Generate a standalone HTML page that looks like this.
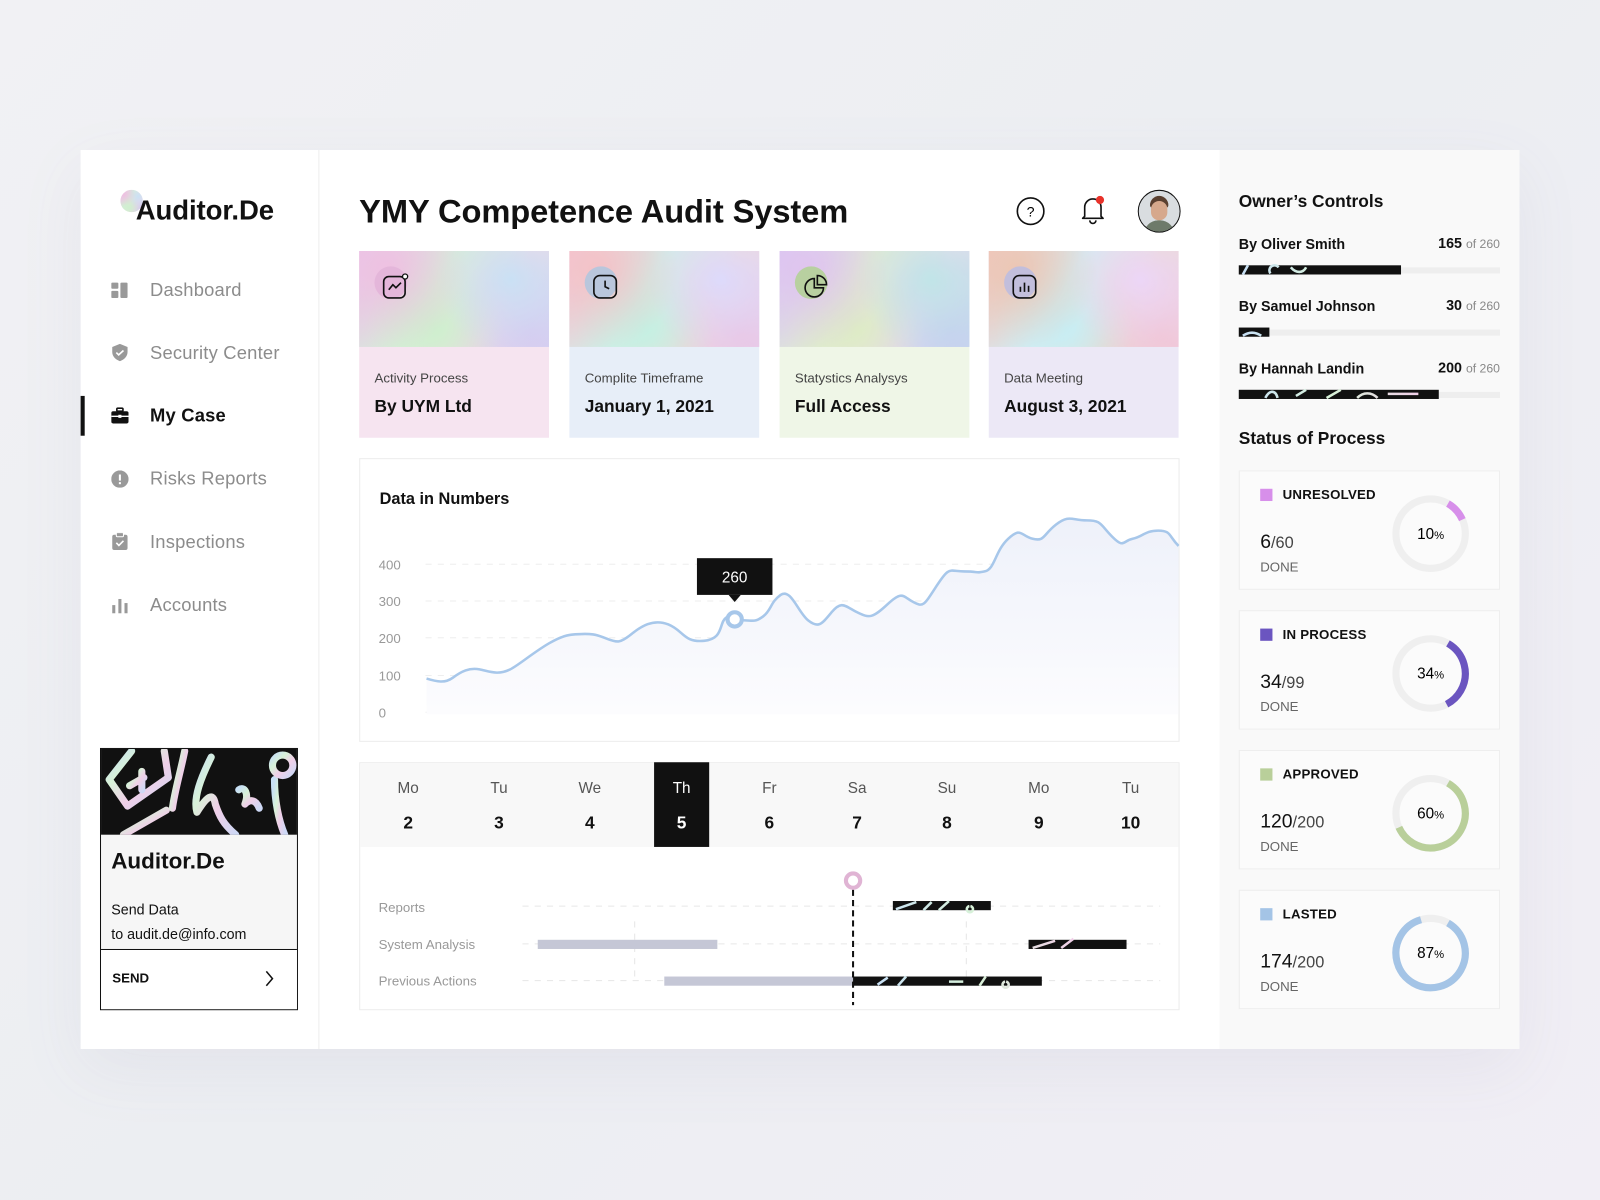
<!DOCTYPE html>
<html><head><meta charset="utf-8"><style>
*{margin:0;padding:0;box-sizing:border-box}
html,body{width:1600px;height:1200px;overflow:hidden}
body{background:linear-gradient(135deg,#f1f1f4 0%,#eceef2 50%,#f1eef5 100%);font-family:"Liberation Sans",sans-serif;color:#111}
#s{position:absolute;left:0;top:0;width:1568px;height:1176px;transform:scale(1.020408);transform-origin:0 0}
.a{position:absolute}
.panel{left:79px;top:147px;width:1410px;height:881px;background:#fff;box-shadow:0 20px 60px rgba(120,120,150,.08)}
.nav{position:absolute;left:147px;font-size:18px;color:#8c8c8c;letter-spacing:.2px}
.nico{position:absolute;left:109px;width:17px;height:17px}
.holo{background:
radial-gradient(circle at 15% 20%,rgba(240,190,225,.9),transparent 45%),
radial-gradient(circle at 80% 30%,rgba(200,225,245,.95),transparent 45%),
radial-gradient(circle at 40% 80%,rgba(205,240,205,.95),transparent 50%),
radial-gradient(circle at 90% 85%,rgba(215,200,240,.9),transparent 45%),
linear-gradient(120deg,#e8c8ea,#d6eed8 40%,#f3d8e4 70%,#cfdcf3);}
.card{position:absolute;top:246px;width:186px;height:183px}
.card .top{height:94px}
.card .lb{position:absolute;left:15px;top:117px;font-size:13px;color:#444}
.card .vl{position:absolute;left:15px;top:143px;font-size:17px;font-weight:bold;color:#111}
.ci{position:absolute;left:15px;top:15px;width:32px;height:32px;border-radius:50%}
.yl{position:absolute;left:371px;font-size:13px;color:#999}
.day{position:absolute;top:747px;width:54px;text-align:center;height:83px}
.day .d{margin-top:17px;font-size:15px;color:#555}
.day .n{margin-top:16px;font-size:17px;font-weight:bold;color:#111}
.gl{position:absolute;left:371px;font-size:13px;color:#999}
.st{position:absolute;left:1214px;width:256px;height:117px;border:1px solid #eee;background:#fbfbfb}
.st .sq{position:absolute;left:20px;top:17px;width:12px;height:12px}
.st .t{position:absolute;left:42px;top:15px;font-size:13px;font-weight:bold;letter-spacing:.2px}
.st .v{position:absolute;left:20px;top:59px;font-size:19px;color:#111}
.st .v span{font-size:16px;color:#444}
.st .dn{position:absolute;left:20px;top:86px;font-size:13px;color:#666}
.st svg{position:absolute;left:147px;top:21px}
.oc{position:absolute;left:1214px;font-size:14px;font-weight:bold}
.ov{position:absolute;right:98px;font-size:14px;font-weight:bold;text-align:right}
.ov span{font-size:12px;font-weight:normal;color:#888}
.tr{position:absolute;left:1214px;width:256px;height:6px;background:#eee}
.bk{position:absolute;left:1214px;height:9px;background:#111;overflow:hidden}
</style></head><body><div id="s">
<div class="a panel"></div>
<div class="a" style="left:312px;top:147px;width:1px;height:881px;background:#eee"></div>
<div class="a" style="left:1195px;top:147px;width:294px;height:881px;background:#f9f9f9"></div>

<div class="a holo" style="left:118px;top:186px;width:22px;height:22px;border-radius:50%"></div>
<div class="a" style="left:133px;top:191px;font-size:27px;font-weight:bold;letter-spacing:-.1px">Auditor.De</div>

<svg class="nico" style="top:276px" viewBox="0 0 17 17"><rect x="0" y="1" width="7" height="6" rx="1" fill="#999"/><rect x="0" y="9" width="7" height="7" rx="1" fill="#999"/><rect x="9" y="1" width="7" height="15" rx="1" fill="#999"/></svg>
<div class="nav" style="top:274px">Dashboard</div>
<svg class="nico" style="top:337px" viewBox="0 0 17 17"><path d="M8.5 0L16 3v5c0 4.5-3.5 7.5-7.5 9C4.5 15.5 1 12.5 1 8V3z" fill="#999"/><path d="M5 8.5l2.3 2.3L12 6.5" stroke="#fff" stroke-width="1.6" fill="none"/></svg>
<div class="nav" style="top:336px">Security Center</div>
<div class="a" style="left:79px;top:388px;width:4px;height:39px;background:#111"></div>
<svg class="nico" style="top:399px" viewBox="0 0 17 17"><rect x="5.5" y="1" width="6" height="3" rx="1" fill="none" stroke="#111" stroke-width="1.6"/><rect x="0" y="4" width="17" height="12" rx="2" fill="#111"/><path d="M0 9h17" stroke="#fff" stroke-width="1.3"/><rect x="7" y="7.5" width="3" height="3" fill="#fff"/></svg>
<div class="nav" style="top:397px;color:#111;font-weight:bold">My Case</div>
<svg class="nico" style="top:461px" viewBox="0 0 17 17"><circle cx="8.5" cy="8.5" r="8.5" fill="#999"/><rect x="7.5" y="4" width="2" height="6" fill="#fff"/><rect x="7.5" y="11.5" width="2" height="2" fill="#fff"/></svg>
<div class="nav" style="top:459px">Risks Reports</div>
<svg class="nico" style="top:522px" viewBox="0 0 17 17"><rect x="1" y="2" width="15" height="15" rx="2" fill="#999"/><rect x="5" y="0" width="7" height="4" rx="1" fill="#999" stroke="#fff" stroke-width="1"/><path d="M5 10l2.5 2.5L12 8" stroke="#fff" stroke-width="1.6" fill="none"/></svg>
<div class="nav" style="top:521px">Inspections</div>
<svg class="nico" style="top:585px" viewBox="0 0 17 17"><rect x="1" y="8" width="3" height="8" fill="#999"/><rect x="7" y="2" width="3" height="14" fill="#999"/><rect x="13" y="6" width="3" height="10" fill="#999"/></svg>
<div class="nav" style="top:583px">Accounts</div>

<div class="a" style="left:98px;top:733px;width:194px;height:257px;border:1.5px solid #111;background:#f6f6f6;overflow:hidden">
<svg width="194" height="84" style="display:block;background:#111"><defs><linearGradient id="hg" x1="0" x2="1" y1="0" y2="1"><stop offset="0" stop-color="#c8e0f5"/><stop offset=".3" stop-color="#d8f2d8"/><stop offset=".6" stop-color="#f0cfe8"/><stop offset="1" stop-color="#cdd8f5"/></linearGradient></defs>
<g fill="none" stroke="url(#hg)" stroke-width="7" stroke-linecap="round" stroke-linejoin="round">
<path d="M30 2L8 30l18 26 40-28-4-26"/><path d="M28 36l14-8M40 22v18"/><path d="M22 84l42-24"/>
<path d="M82 2c-4 20-10 40-12 56"/><path d="M108 8c-10 20-18 40-14 54 10-16 16-20 18-8 4 12 8 20 20 30"/>
<path d="M135 40c6-4 10 4 6 14 4-4 10-6 14 4"/><path d="M148 4v20"/><path d="M170 30c0 20 4 40 10 54"/></g>
<circle cx="178" cy="16" r="10" fill="none" stroke="url(#hg)" stroke-width="7"/></svg>
<div style="position:absolute;left:10px;top:97px;font-size:22px;font-weight:bold">Auditor.De</div>
<div style="position:absolute;left:10px;top:145px;font-size:14px;line-height:24px">Send Data<br>to audit.de@info.com</div>
<div style="position:absolute;left:0;top:196px;width:194px;height:60px;background:#fff;border-top:1.5px solid #111">
<div style="position:absolute;left:11px;top:20px;font-size:13px;font-weight:bold">SEND</div>
<svg style="position:absolute;left:160px;top:20px" width="10" height="16"><path d="M2 1l6 7-6 7" stroke="#111" stroke-width="1.5" fill="none"/></svg></div>
</div>

<div class="a" style="left:352px;top:189px;font-size:32px;font-weight:bold;letter-spacing:-.1px">YMY Competence Audit System</div>
<svg class="a" style="left:996px;top:193px" width="28" height="28"><circle cx="14" cy="14" r="13" fill="none" stroke="#111" stroke-width="1.6"/><text x="14" y="19" text-anchor="middle" font-size="14" font-family="Liberation Sans">?</text></svg>
<svg class="a" style="left:1056px;top:190px" width="30" height="32"><path d="M7 22V13a8 8 0 0 1 16 0v9l2 2H5z" fill="none" stroke="#111" stroke-width="1.6" stroke-linejoin="round"/><path d="M12 26a3 3 0 0 0 6 0" fill="none" stroke="#111" stroke-width="1.6"/><circle cx="22" cy="6" r="4" fill="#e8322a"/></svg>
<div class="a" style="left:1115px;top:186px;width:42px;height:42px;border-radius:50%;border:1.5px solid #111;overflow:hidden;background:#d9dde0">
<div style="position:absolute;left:11px;top:5px;width:18px;height:12px;border-radius:9px 9px 3px 3px;background:#5a4030"></div>
<div style="position:absolute;left:12px;top:10px;width:16px;height:19px;border-radius:8px;background:#d6a88c"></div>
<div style="position:absolute;left:5px;top:29px;width:30px;height:16px;border-radius:14px 14px 0 0;background:#6e7a6a"></div></div>

<div class="card" style="left:352px;background:#f6e4f0"><div class="top holo"></div><div class="ci" style="background:#e4b6da"></div>
<svg class="a" style="left:22px;top:21px" width="28" height="28"><rect x="2" y="4" width="21" height="21" rx="5" fill="none" stroke="#111" stroke-width="1.6"/><path d="M7 17l4-5 3 3 5-5" fill="none" stroke="#111" stroke-width="1.6"/><circle cx="23" cy="4" r="2.5" fill="#fff" stroke="#111" stroke-width="1.3"/></svg>
<div class="lb">Activity Process</div><div class="vl">By UYM Ltd</div></div>
<div class="card" style="left:558px;background:#e7eef8"><div class="top holo" style="filter:hue-rotate(40deg)"></div><div class="ci" style="background:#b9c6dc"></div>
<svg class="a" style="left:22px;top:21px" width="28" height="28"><rect x="2" y="3" width="22" height="22" rx="6" fill="none" stroke="#111" stroke-width="1.6"/><path d="M13 8v6l4 2" fill="none" stroke="#111" stroke-width="1.6"/></svg>
<div class="lb">Complite Timeframe</div><div class="vl">January 1, 2021</div></div>
<div class="card" style="left:764px;background:#eff6e7"><div class="top holo" style="filter:hue-rotate(-30deg)"></div><div class="ci" style="background:#b8d0a0"></div>
<svg class="a" style="left:22px;top:21px" width="28" height="28"><path d="M12 6a9 9 0 1 0 9 9h-9z" fill="none" stroke="#111" stroke-width="1.6"/><path d="M15 3a9 9 0 0 1 9 9h-9z" fill="none" stroke="#111" stroke-width="1.6"/></svg>
<div class="lb">Statystics Analysys</div><div class="vl">Full Access</div></div>
<div class="card" style="left:969px;background:#ece8f6"><div class="top holo" style="filter:hue-rotate(70deg)"></div><div class="ci" style="background:#c2bedc"></div>
<svg class="a" style="left:22px;top:21px" width="28" height="28"><rect x="2" y="3" width="22" height="22" rx="6" fill="none" stroke="#111" stroke-width="1.6"/><path d="M9 19v-5M13 19v-9M17 19v-6" stroke="#111" stroke-width="1.6"/></svg>
<div class="lb">Data Meeting</div><div class="vl">August 3, 2021</div></div>

<div class="a" style="left:352px;top:449px;width:804px;height:278px;border:1px solid #ececec"></div>
<div class="a" style="left:372px;top:481px;font-size:16px;font-weight:bold">Data in Numbers</div>
<div class="yl" style="top:546px">400</div><div class="yl" style="top:582px">300</div><div class="yl" style="top:618px">200</div><div class="yl" style="top:655px">100</div><div class="yl" style="top:691px">0</div>
<svg class="a" style="left:0;top:0" width="1568" height="1176">
<defs><linearGradient id="fg" x1="0" y1="0" x2="0" y2="1"><stop offset="0" stop-color="#eef1fa"/><stop offset="1" stop-color="#fcfcfe"/></linearGradient></defs>
<g stroke="#eee" stroke-dasharray="6 6"><path d="M417 553H1150M417 589H1150M417 625H1150M417 662H1150M417 698H1150"/></g>
<path d="M418 665C428 668 436 670 444 664S460 654 470 656 488 662 500 656 540 624 560 622 585 622 595 626 608 630 618 622 640 606 655 612 670 630 690 628 704 610 712 605 722 608 730 608 740 610 748 604 755 590 765 583 782 600 792 608 805 612 815 600 828 594 840 600 855 606 870 592 885 585 895 590 905 594 918 574 930 560 945 560 955 562 965 560 975 540 988 528 1000 525 1012 528 1022 524 1035 514 1050 510 1065 510 1078 514 1090 526 1100 530 1110 528 1122 520 1135 520 1145 525 1155 535L1155 700L418 700Z" fill="url(#fg)"/>
<path d="M418 665C428 668 436 670 444 664S460 654 470 656 488 662 500 656 540 624 560 622 585 622 595 626 608 630 618 622 640 606 655 612 670 630 690 628 704 610 712 605 722 608 730 608 740 610 748 604 755 590 765 583 782 600 792 608 805 612 815 600 828 594 840 600 855 606 870 592 885 585 895 590 905 594 918 574 930 560 945 560 955 562 965 560 975 540 988 528 1000 525 1012 528 1022 524 1035 514 1050 510 1065 510 1078 514 1090 526 1100 530 1110 528 1122 520 1135 520 1145 525 1155 535" fill="none" stroke="#a7c7ea" stroke-width="2.5"/>
<circle cx="720" cy="607" r="7" fill="#fff" stroke="#a7c7ea" stroke-width="4"/>
<rect x="683" y="547" width="74" height="36" fill="#111"/><path d="M714 583l6 7 6-7z" fill="#111"/>
<text x="720" y="571" text-anchor="middle" fill="#fff" font-size="15" font-family="Liberation Sans">260</text>
</svg>

<div class="a" style="left:352px;top:747px;width:804px;height:243px;border:1px solid #ececec"></div>
<div class="a" style="left:353px;top:748px;width:802px;height:82px;background:#f8f8f8"></div>
<div class="day" style="left:373px"><div class="d">Mo</div><div class="n">2</div></div>
<div class="day" style="left:462px"><div class="d">Tu</div><div class="n">3</div></div>
<div class="day" style="left:551px"><div class="d">We</div><div class="n">4</div></div>
<div class="day" style="left:641px;background:#111"><div class="d" style="color:#fff">Th</div><div class="n" style="color:#fff">5</div></div>
<div class="day" style="left:727px"><div class="d">Fr</div><div class="n">6</div></div>
<div class="day" style="left:813px"><div class="d">Sa</div><div class="n">7</div></div>
<div class="day" style="left:901px"><div class="d">Su</div><div class="n">8</div></div>
<div class="day" style="left:991px"><div class="d">Mo</div><div class="n">9</div></div>
<div class="day" style="left:1081px"><div class="d">Tu</div><div class="n">10</div></div>
<div class="gl" style="top:882px">Reports</div><div class="gl" style="top:918px">System Analysis</div><div class="gl" style="top:954px">Previous Actions</div>
<svg class="a" style="left:0;top:0" width="1568" height="1176">
<defs><linearGradient id="hg2" x1="0" x2="1"><stop offset="0" stop-color="#c8e0f5"/><stop offset=".5" stop-color="#d8f2d8"/><stop offset="1" stop-color="#f0cfe8"/></linearGradient></defs>
<g stroke="#e6e6e6" stroke-dasharray="6 6"><path d="M512 888H1137M512 925H1137M512 961H1137M622 903V958M947 903V958"/></g>
<rect x="527" y="921" width="176" height="9" fill="#c5c7d6"/>
<rect x="651" y="957" width="185" height="9" fill="#c5c7d6"/>
<rect x="836" y="957" width="185" height="9" fill="#111"/>
<rect x="875" y="883" width="96" height="9" fill="#111"/>
<rect x="1008" y="921" width="96" height="9" fill="#111"/>
<g stroke="url(#hg2)" stroke-width="2.5" fill="none"><path d="M878 891l20-7M905 892l8-8M920 892l10-9M950 888a3 3 0 1 0 1 0M1012 929l22-7M1040 929l12-9M860 965l10-7M880 966l8-9M930 962h14M960 966l6-9M985 962a3 3 0 1 0 1 0"/></g>
<path d="M836 872V985" stroke="#111" stroke-width="2" stroke-dasharray="6 4"/>
<circle cx="836" cy="863" r="7" fill="#fff" stroke="#e0b4d4" stroke-width="4"/>
</svg>

<div class="a" style="left:1214px;top:188px;font-size:17px;font-weight:bold">Owner’s Controls</div>
<div class="oc" style="top:231px">By Oliver Smith</div><div class="ov" style="top:230px">165 <span>of 260</span></div>
<div class="tr" style="top:262px"></div><div class="bk" style="top:260px;width:159px"></div>
<div class="oc" style="top:292px">By Samuel Johnson</div><div class="ov" style="top:291px">30 <span>of 260</span></div>
<div class="tr" style="top:323px"></div><div class="bk" style="top:321px;width:30px"></div>
<div class="oc" style="top:353px">By Hannah Landin</div><div class="ov" style="top:352px">200 <span>of 260</span></div>
<div class="tr" style="top:384px"></div><div class="bk" style="top:382px;width:196px"></div>
<svg class="a" style="left:0;top:0" width="1568" height="1176"><g stroke="url(#hg2)" stroke-width="2.5" fill="none"><path d="M1218 269l5-9M1245 268a5 5 0 1 1 8-6M1265 262c5 6 12 6 15 0M1218 329c6-4 12-4 18 0M1240 390c4-8 10-8 12 0M1270 388l10-6M1300 390l14-8M1330 390c6-6 14-6 20 0M1360 386h30"/></g></svg>
<div class="a" style="left:1214px;top:420px;font-size:17px;font-weight:bold">Status of Process</div>

<div class="st" style="top:461px"><div class="sq" style="background:#d78fea"></div><div class="t">UNRESOLVED</div><div class="v">6<span>/60</span></div><div class="dn">DONE</div>
<svg width="80" height="80"><circle cx="40" cy="40" r="34" fill="none" stroke="#efefef" stroke-width="7"/><circle cx="40" cy="40" r="34" fill="none" stroke="#d78fea" stroke-width="7" stroke-dasharray="21.4 300" transform="rotate(-60 40 40)"/><text x="40" y="45" text-anchor="middle" font-size="15" font-family="Liberation Sans">10<tspan font-size="11">%</tspan></text></svg></div>
<div class="st" style="top:598px"><div class="sq" style="background:#6b55c0"></div><div class="t">IN PROCESS</div><div class="v">34<span>/99</span></div><div class="dn">DONE</div>
<svg width="80" height="80"><circle cx="40" cy="40" r="34" fill="none" stroke="#efefef" stroke-width="7"/><circle cx="40" cy="40" r="34" fill="none" stroke="#6b55c0" stroke-width="7" stroke-dasharray="72.6 300" transform="rotate(-60 40 40)"/><text x="40" y="45" text-anchor="middle" font-size="15" font-family="Liberation Sans">34<tspan font-size="11">%</tspan></text></svg></div>
<div class="st" style="top:735px"><div class="sq" style="background:#b9cf9a"></div><div class="t">APPROVED</div><div class="v">120<span>/200</span></div><div class="dn">DONE</div>
<svg width="80" height="80"><circle cx="40" cy="40" r="34" fill="none" stroke="#efefef" stroke-width="7"/><circle cx="40" cy="40" r="34" fill="none" stroke="#b9cf9a" stroke-width="7" stroke-dasharray="128 300" transform="rotate(-60 40 40)"/><text x="40" y="45" text-anchor="middle" font-size="15" font-family="Liberation Sans">60<tspan font-size="11">%</tspan></text></svg></div>
<div class="st" style="top:872px"><div class="sq" style="background:#a4c4e6"></div><div class="t">LASTED</div><div class="v">174<span>/200</span></div><div class="dn">DONE</div>
<svg width="80" height="80"><circle cx="40" cy="40" r="34" fill="none" stroke="#efefef" stroke-width="7"/><circle cx="40" cy="40" r="34" fill="none" stroke="#a4c4e6" stroke-width="7" stroke-dasharray="186 300" transform="rotate(-60 40 40)"/><text x="40" y="45" text-anchor="middle" font-size="15" font-family="Liberation Sans">87<tspan font-size="11">%</tspan></text></svg></div>
</div></body></html>
